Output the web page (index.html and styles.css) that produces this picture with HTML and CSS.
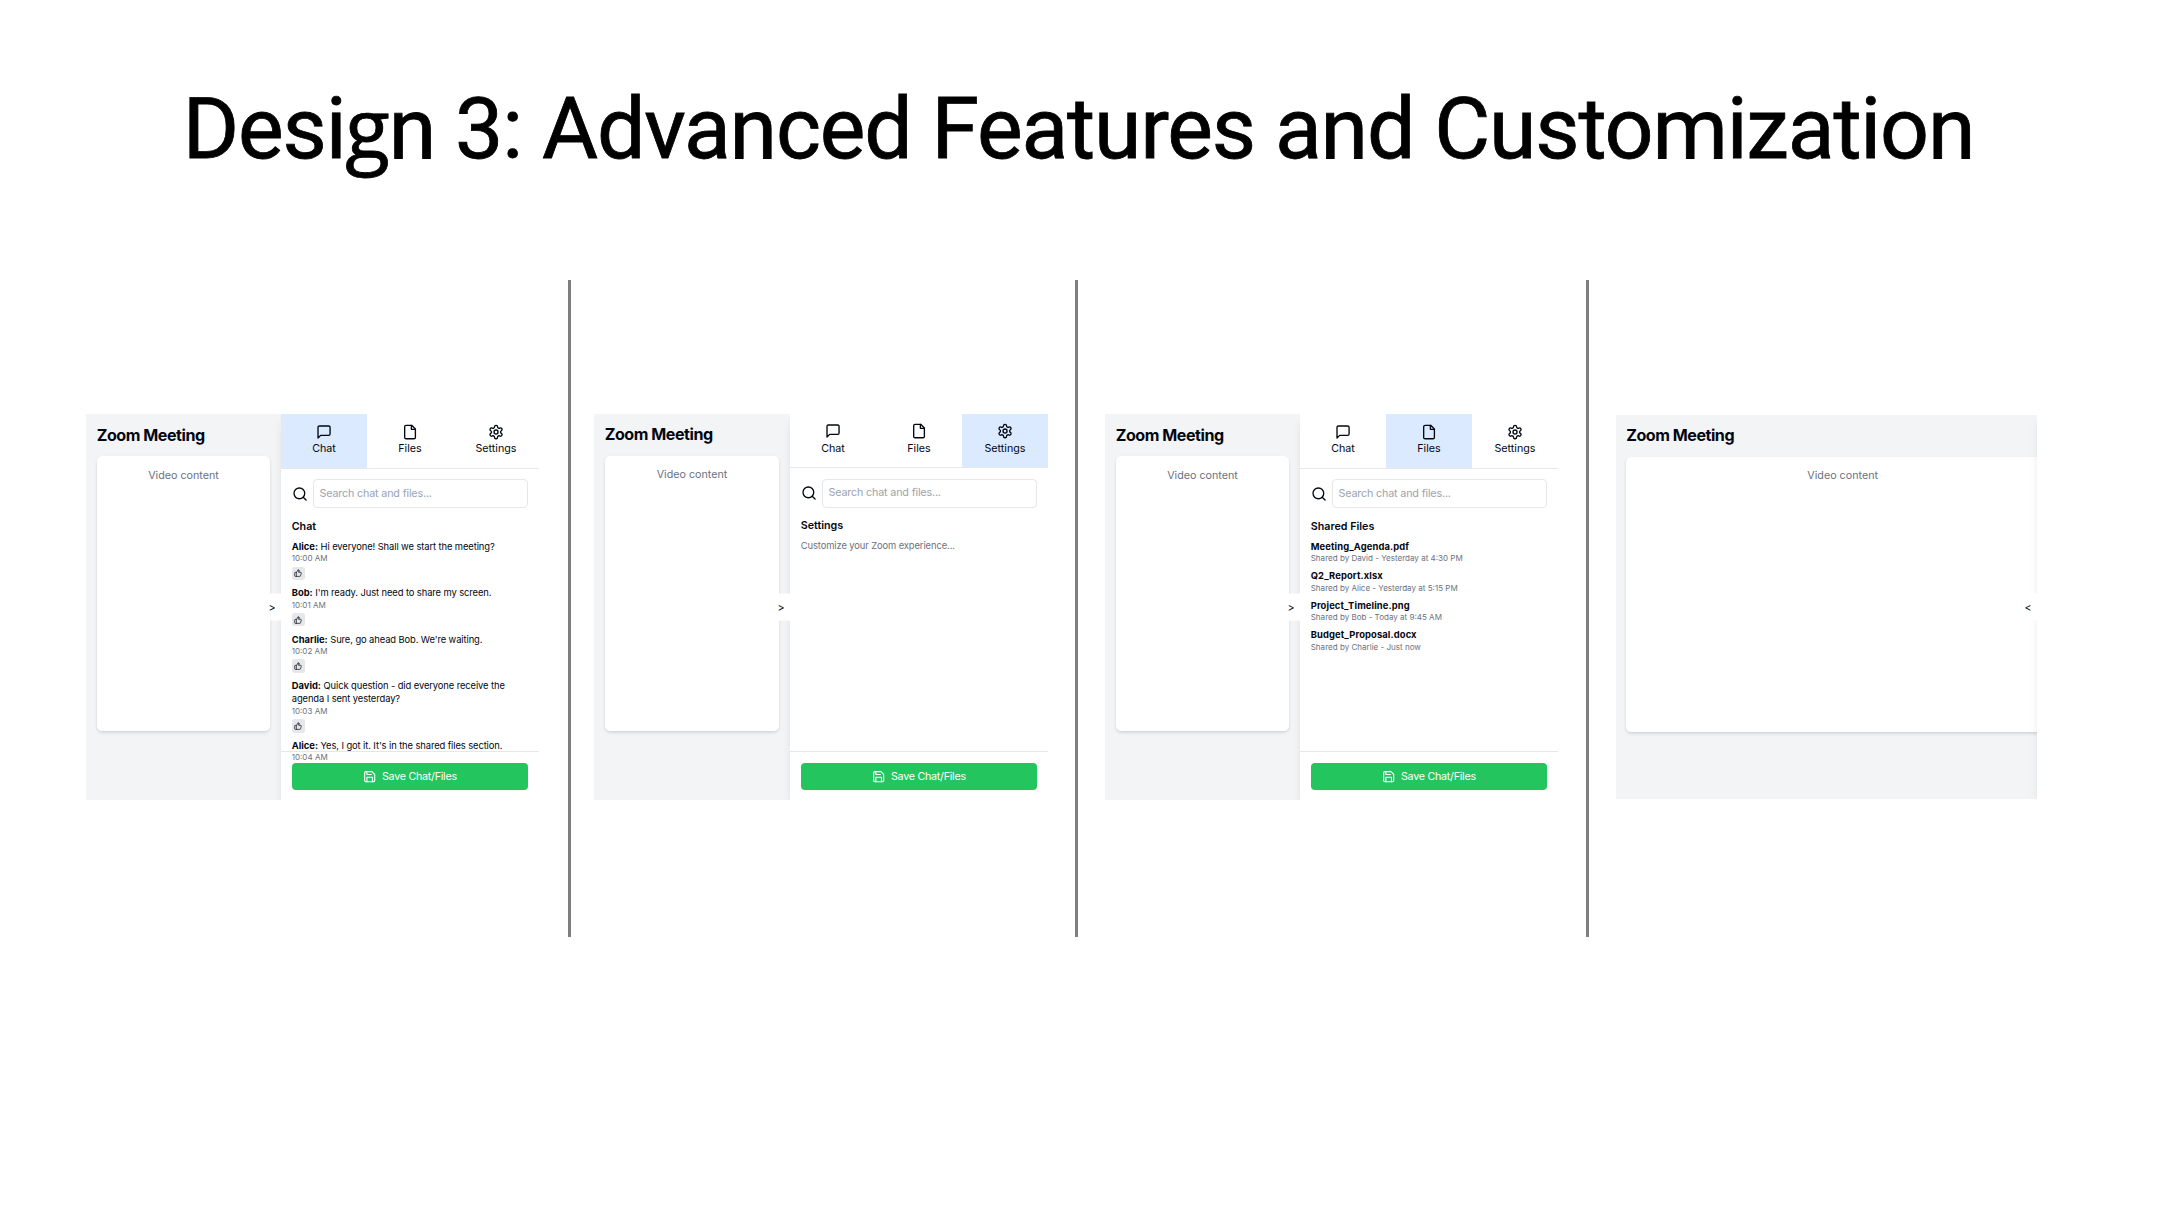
FILE: index.html
```html
<!DOCTYPE html>
<html lang="en">
<head>
<meta charset="utf-8">
<title>Design 3: Advanced Features and Customization</title>
<link rel="stylesheet" href="styles.css">
</head>
<body>
<svg class="sprite" aria-hidden="true">
  <symbol id="i-chat" viewBox="0 0 24 24"><path d="M21 15a2 2 0 0 1-2 2H7l-4 4V5a2 2 0 0 1 2-2h14a2 2 0 0 1 2 2z"/></symbol>
  <symbol id="i-file" viewBox="0 0 24 24"><path d="M14.5 2H6a2 2 0 0 0-2 2v16a2 2 0 0 0 2 2h12a2 2 0 0 0 2-2V7.500z"/><path d="M14 2v6h6"/></symbol>
  <symbol id="i-gear" viewBox="0 0 24 24"><path d="M12.220 2h-.44a2 2 0 0 0-2 2v.18a2 2 0 0 1-1 1.730l-.43.25a2 2 0 0 1-2 0l-.15-.08a2 2 0 0 0-2.730.73l-.22.38a2 2 0 0 0 .73 2.730l.15.1a2 2 0 0 1 1 1.720v.51a2 2 0 0 1-1 1.740l-.15.09a2 2 0 0 0-.73 2.730l.22.38a2 2 0 0 0 2.730.73l.15-.08a2 2 0 0 1 2 0l.43.25a2 2 0 0 1 1 1.730V20a2 2 0 0 0 2 2h.44a2 2 0 0 0 2-2v-.18a2 2 0 0 1 1-1.730l.43-.25a2 2 0 0 1 2 0l.15.08a2 2 0 0 0 2.730-.73l.22-.39a2 2 0 0 0-.73-2.730l-.15-.08a2 2 0 0 1-1-1.740v-.5a2 2 0 0 1 1-1.740l.15-.09a2 2 0 0 0 .73-2.730l-.22-.38a2 2 0 0 0-2.730-.73l-.15.08a2 2 0 0 1-2 0l-.43-.25a2 2 0 0 1-1-1.730V4a2 2 0 0 0-2-2z"/><circle cx="12" cy="12" r="3"/></symbol>
  <symbol id="i-search" viewBox="0 0 24 24"><circle cx="11" cy="11" r="8"/><path d="m21 21-4.300-4.300"/></symbol>
  <symbol id="i-like" viewBox="0 0 24 24"><path d="M7 10v12"/><path d="M15 5.880 14 10h5.830a2 2 0 0 1 1.920 2.560l-2.330 8A2 2 0 0 1 17.500 22H4a2 2 0 0 1-2-2v-8a2 2 0 0 1 2-2h2.760a2 2 0 0 0 1.790-1.110L12 2a3.130 3.130 0 0 1 3 3.880Z"/></symbol>
  <symbol id="i-save" viewBox="0 0 24 24"><path d="M19 21H5a2 2 0 0 1-2-2V5a2 2 0 0 1 2-2h11l5 5v11a2 2 0 0 1-2 2z"/><path d="M17 21v-8H7v8"/><path d="M7 3v5h8"/></symbol>
</svg>

<h1 class="slide-title">Desi<span class="slide-title-g">g</span>n 3: Advanced Features and Customization</h1>

<main class="boards">
  <section class="app app-chat">
    <div class="stage">
      <h2 class="stage-title">Zoom Meeting</h2>
      <div class="video">Video content</div>
      <button class="toggle">&gt;</button>
    </div>
    <aside class="side">
      <nav class="tabs">
        <div class="tab active"><svg class="icon"><use href="#i-chat"/></svg>Chat</div>
        <div class="tab"><svg class="icon"><use href="#i-file"/></svg>Files</div>
        <div class="tab"><svg class="icon"><use href="#i-gear"/></svg>Settings</div>
      </nav>
      <div class="search"><svg class="icon"><use href="#i-search"/></svg><div class="field">Search chat and files...</div></div>
      <div class="content">
        <h3 class="heading">Chat</h3>
        <div class="messages">
          <div class="message"><p class="text"><b>Alice:</b> Hi everyone! Shall we start the meeting?</p><p class="meta">10:00 AM</p><span class="like"><svg class="icon-xs"><use href="#i-like"/></svg></span></div>
          <div class="message"><p class="text"><b>Bob:</b> I'm ready. Just need to share my screen.</p><p class="meta">10:01 AM</p><span class="like"><svg class="icon-xs"><use href="#i-like"/></svg></span></div>
          <div class="message"><p class="text"><b>Charlie:</b> Sure, go ahead Bob. We're waiting.</p><p class="meta">10:02 AM</p><span class="like"><svg class="icon-xs"><use href="#i-like"/></svg></span></div>
          <div class="message"><p class="text"><b>David:</b> Quick question - did everyone receive the agenda I sent yesterday?</p><p class="meta">10:03 AM</p><span class="like"><svg class="icon-xs"><use href="#i-like"/></svg></span></div>
          <div class="message"><p class="text"><b>Alice:</b> Yes, I got it. It's in the shared files section.</p><p class="meta">10:04 AM</p></div>
        </div>
      </div>
      <footer class="footer"><button class="save"><svg class="icon-sm"><use href="#i-save"/></svg>Save Chat/Files</button></footer>
    </aside>
  </section>

  <div class="divider"></div>

  <section class="app app-settings">
    <div class="stage">
      <h2 class="stage-title">Zoom Meeting</h2>
      <div class="video">Video content</div>
      <button class="toggle">&gt;</button>
    </div>
    <aside class="side">
      <nav class="tabs">
        <div class="tab"><svg class="icon"><use href="#i-chat"/></svg>Chat</div>
        <div class="tab"><svg class="icon"><use href="#i-file"/></svg>Files</div>
        <div class="tab active"><svg class="icon"><use href="#i-gear"/></svg>Settings</div>
      </nav>
      <div class="search"><svg class="icon"><use href="#i-search"/></svg><div class="field">Search chat and files...</div></div>
      <div class="content">
        <h3 class="heading">Settings</h3>
        <p class="text muted">Customize your Zoom experience...</p>
      </div>
      <footer class="footer"><button class="save"><svg class="icon-sm"><use href="#i-save"/></svg>Save Chat/Files</button></footer>
    </aside>
  </section>

  <div class="divider"></div>

  <section class="app app-files">
    <div class="stage">
      <h2 class="stage-title">Zoom Meeting</h2>
      <div class="video">Video content</div>
      <button class="toggle">&gt;</button>
    </div>
    <aside class="side">
      <nav class="tabs">
        <div class="tab"><svg class="icon"><use href="#i-chat"/></svg>Chat</div>
        <div class="tab active"><svg class="icon"><use href="#i-file"/></svg>Files</div>
        <div class="tab"><svg class="icon"><use href="#i-gear"/></svg>Settings</div>
      </nav>
      <div class="search"><svg class="icon"><use href="#i-search"/></svg><div class="field">Search chat and files...</div></div>
      <div class="content">
        <h3 class="heading">Shared Files</h3>
        <div class="files">
          <div><p class="text"><b>Meeting_Agenda.pdf</b></p><p class="meta">Shared by David - Yesterday at 4:30 PM</p></div>
          <div><p class="text"><b>Q2_Report.xlsx</b></p><p class="meta">Shared by Alice - Yesterday at 5:15 PM</p></div>
          <div><p class="text"><b>Project_Timeline.png</b></p><p class="meta">Shared by Bob - Today at 9:45 AM</p></div>
          <div><p class="text"><b>Budget_Proposal.docx</b></p><p class="meta">Shared by Charlie - Just now</p></div>
        </div>
      </div>
      <footer class="footer"><button class="save"><svg class="icon-sm"><use href="#i-save"/></svg>Save Chat/Files</button></footer>
    </aside>
  </section>

  <div class="divider"></div>

  <section class="app app-collapsed">
    <div class="stage">
      <h2 class="stage-title">Zoom Meeting</h2>
      <div class="video">Video content</div>
      <button class="toggle">&lt;</button>
    </div>
    <aside class="side"></aside>
  </section>
</main>
</body>
</html>
```

FILE: styles.css
```css
html { font-size: 10.72px; }
* { box-sizing: border-box; margin: 0; padding: 0; }
body { width: 2160px; height: 1215px; overflow: hidden; background: #fff; color: #030712; font-family: Inter, "Liberation Sans", sans-serif; line-height: 1.5; }
.sprite { display: none; }
svg { fill: none; stroke: currentColor; stroke-width: 2; stroke-linecap: round; stroke-linejoin: round; flex: none; }

.slide-title { height: 280px; padding: 74px 3px 0 0; text-align: center; font: 400 86px/104px Roboto, sans-serif; letter-spacing: -1.2px; -webkit-text-stroke: .8px #000; color: #000; white-space: nowrap; }
.slide-title-g { font-family: "Open Sans", sans-serif; font-size: 82px; }

.boards { display: flex; height: 657px; }
.divider { width: 3px; background: #7f7f7f; }

.app { display: flex; width: 453px; height: 386px; margin-top: 134px; overflow: hidden; flex: none; }
.app-chat { margin-left: 86px; margin-right: 29px; }
.app-settings { width: 454px; margin-left: 23px; margin-right: 27px; }
.app-files { margin-left: 27px; margin-right: 28px; }
.app-collapsed { width: 421px; height: 384px; margin-top: 135px; margin-left: 27px; }

.stage { position: relative; flex: 1; min-width: 0; padding: 1rem; background: #f3f4f6; }
.stage-title { font-size: 1.5rem; line-height: 2rem; font-weight: 700; letter-spacing: -.46px; margin-bottom: .95rem; }
.video { height: 274.5px; padding: 1.07rem 1rem 1rem; border-radius: .5rem; background: #fff; color: #6b7280; text-align: center; box-shadow: 0 2px 4px -1px rgba(0,0,0,.14), 0 1px 3px rgba(0,0,0,.05); }
.toggle { position: absolute; z-index: 2; right: 0; top: 50%; transform: translateY(-50%); padding: .55rem .5rem .45rem; border: 0; border-radius: .4rem 0 0 .4rem; background: #fff; color: inherit; font: 1rem/1.5 Inter, sans-serif; }

.side { position: relative; width: 258px; display: flex; flex-direction: column; flex: none; background: #fff; box-shadow: 0 7px 10px -2px rgba(0,0,0,.1), 0 2px 4px -3px rgba(0,0,0,.1); }
.tabs { display: flex; border-bottom: 1px solid #e5e7eb; }
.tab { flex: 1; display: flex; flex-direction: column; align-items: center; padding: .93rem 0 .95rem; }
.tab .icon { margin-bottom: .12rem; }
.tab.active { background: #dbeafe; }
.icon { width: 1.5rem; height: 1.5rem; }
.icon-sm { width: 1.25rem; height: 1.25rem; }
.icon-xs { width: .75rem; height: .75rem; }

.search { display: flex; align-items: center; gap: .5rem; padding: 1rem 1rem 1rem; }
.field { flex: 1; padding: .5rem; border: 1px solid #e5e7eb; border-radius: .375rem; color: #9ca3af; line-height: 1.5; letter-spacing: -.15px; }

.content { flex: 1; min-height: 0; padding: 0 1rem; }
.heading { font-size: 1rem; font-weight: 600; margin-bottom: .47rem; }
.text { font-size: .875rem; line-height: 1.25rem; letter-spacing: -.1px; }
.text b { font-weight: 700; letter-spacing: 0; }
.files .text b { letter-spacing: .12px; }
.muted, .meta { color: #6b7280; }
.meta { font-size: .75rem; line-height: 1rem; }
.messages { display: flex; flex-direction: column; gap: 6.2px; }
.files { display: flex; flex-direction: column; gap: .5rem; }
.like { display: flex; width: 1.25rem; height: 1.25rem; margin-top: .25rem; padding: .25rem; border-radius: .25rem; background: #e5e7eb; }

.footer { padding: 1rem 1rem .93rem; border-top: 1px solid #e5e7eb; }
.save { position: relative; display: flex; align-items: center; justify-content: center; gap: .5rem; width: 100%; padding: .52rem .5rem .5rem; border: 0; border-radius: .375rem; background: #22c55e; color: #fff; font: 1rem/1.5 Inter, sans-serif; letter-spacing: -.26px; }

.app-settings .stage { padding-top: .94rem; }
.app-settings .video { height: 275px; }
.app-settings .tab { padding: .87rem 0 .97rem; }

.app-collapsed .stage { padding: .95rem; }
.app-collapsed .video { width: 433px; height: 275px; }
.app-collapsed .side { margin-right: -258px; }
```
